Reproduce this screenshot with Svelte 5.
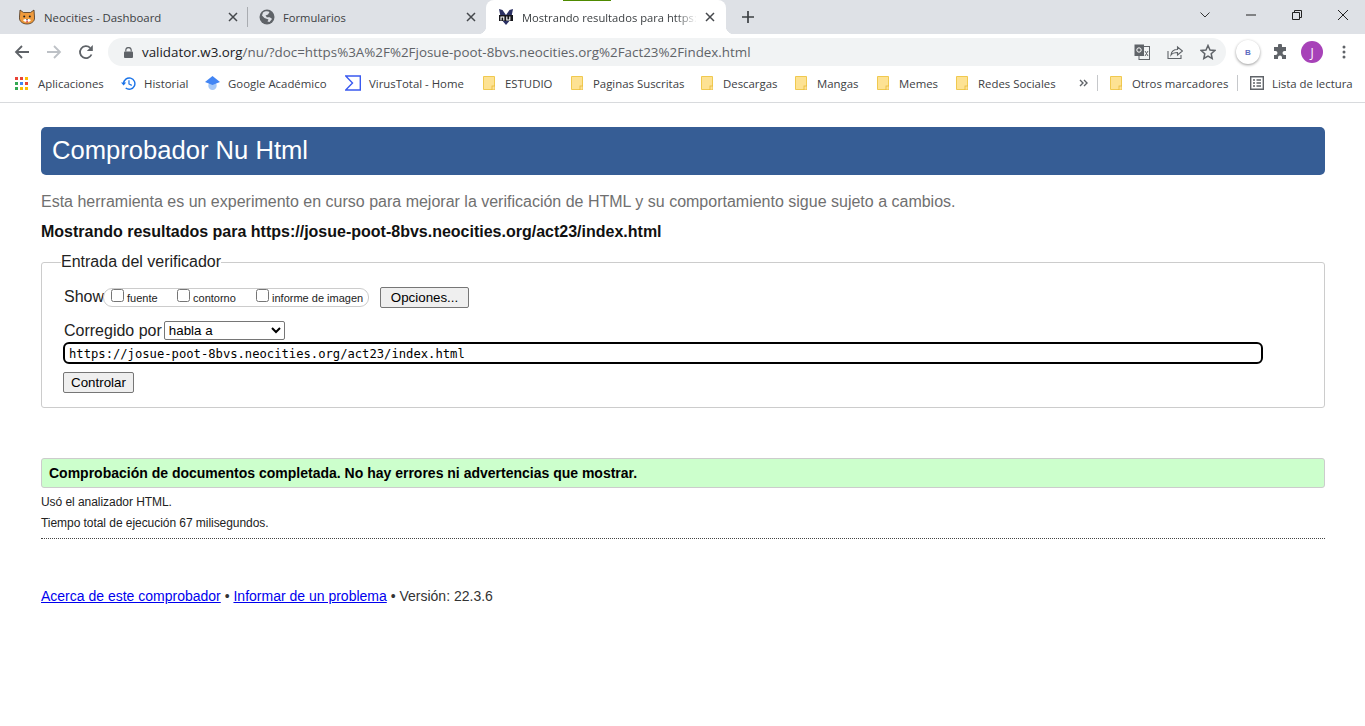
<script>
  const bookmarks = [
    { label: 'ESTUDIO', cls: 'w-estudio' },
    { label: 'Paginas Suscritas', cls: 'w-paginas' },
    { label: 'Descargas', cls: 'w-descargas' },
    { label: 'Mangas', cls: 'w-mangas' },
    { label: 'Memes', cls: 'w-memes' },
    { label: 'Redes Sociales', cls: 'w-redes' }
  ];
</script>

<div class="chrome">
  <div class="tabstrip">
    <div class="tab first">
      <svg class="fav" viewBox="0 0 16 16" width="16" height="16">
        <path d="M1 1l3.500 2.500h7L15 1l.6 8c0 3.500-3.400 6-7.600 6S.4 12.500.4 9z" fill="#ee9a3c" stroke="#4a3420" stroke-width=".8"/>
        <path d="M4 11c1-1.500 7-1.500 8 0-1 2.500-7 2.500-8 0z" fill="#fff"/>
        <circle cx="5.200" cy="7.500" r="1" fill="#222"/><circle cx="10.800" cy="7.500" r="1" fill="#222"/>
        <path d="M7 10h2l-1 1.200z" fill="#222"/><path d="M7.200 11.500h1.800v2h-1.800z" fill="#d85a5a"/>
      </svg>
      <span class="tab-title">Neocities - Dashboard</span>
      <svg class="close" viewBox="0 0 10 10" width="10" height="10"><path d="M1 1l8 8M9 1l-8 8" stroke="#45484c" stroke-width="1.500"/></svg>
    </div>
    <div class="tab second">
      <svg class="fav" viewBox="0 0 16 16" width="16" height="16">
        <circle cx="8" cy="8" r="7.500" fill="#5f6368"/>
        <path d="M4 3.500c2-1.500 5-1.500 6.500-.5L9 5.500 6.500 6.500 8 8.500c2-.5 4 0 5 1.500l-2.500 3-2-.5L9.500 10.500 5.500 9 3 6.500z" fill="#dee1e6"/>
      </svg>
      <span class="tab-title">Formularios</span>
      <svg class="close" viewBox="0 0 10 10" width="10" height="10"><path d="M1 1l8 8M9 1l-8 8" stroke="#45484c" stroke-width="1.500"/></svg>
    </div>
    <div class="tab active">
      <i class="progress"></i>
      <svg class="fav" viewBox="0 0 16 16" width="16" height="16">
        <path d="M1 0l3.500 1L8 6l3.500-5L15 0l-2 10-5 6-5-6z" fill="#2a2f62"/>
        <rect x="1" y="6" width="14" height="6" fill="#16161c"/>
        <path d="M3 11.500V8h2.800v3.500M8.800 7.500V11h3V7.500" fill="none" stroke="#fff" stroke-width="1.100"/>
      </svg>
      <span class="tab-title fade">Mostrando resultados para https:</span>
      <svg class="close" viewBox="0 0 10 10" width="10" height="10"><path d="M1 1l8 8M9 1l-8 8" stroke="#45484c" stroke-width="1.500"/></svg>
    </div>
    <svg class="newtab" viewBox="0 0 12 12" width="12" height="12"><path d="M6 0v12M0 6h12" stroke="#3c4043" stroke-width="1.700"/></svg>
    <div class="win">
      <svg viewBox="0 0 10 6" width="10" height="6"><path d="M.5.500L5 5 9.500.500" fill="none" stroke="#333" stroke-width="1"/></svg>
      <svg viewBox="0 0 10 10" width="10" height="10"><path d="M0 5h10" stroke="#222" stroke-width="1"/></svg>
      <svg viewBox="0 0 10 10" width="10" height="10"><path d="M.5 2.500h7v7h-7zM2.500 2.500v-2h7v7h-2" fill="none" stroke="#222" stroke-width="1"/></svg>
      <svg viewBox="0 0 10 10" width="10" height="10"><path d="M0 0l10 10M10 0L0 10" stroke="#222" stroke-width="1"/></svg>
    </div>
  </div>

  <div class="toolbar">
    <svg class="nav" viewBox="0 0 16 16" width="16" height="16"><path d="M15 8H2M8 2L2 8l6 6" fill="none" stroke="#5f6368" stroke-width="1.800"/></svg>
    <svg class="nav" viewBox="0 0 16 16" width="16" height="16"><path d="M1 8h13M8 2l6 6-6 6" fill="none" stroke="#bdc1c6" stroke-width="1.800"/></svg>
    <svg class="nav" viewBox="0 0 16 16" width="16" height="16"><path d="M13.500 10.500A6 6 0 1 1 12.200 3.800" fill="none" stroke="#5f6368" stroke-width="1.800"/><path d="M14.800 1v6h-6z" fill="#5f6368"/></svg>
    <div class="omnibox">
      <svg viewBox="0 0 10 12" width="9" height="11"><path d="M2 5V3.500a3 3 0 0 1 6 0V5" fill="none" stroke="#5f6368" stroke-width="1.300"/><rect y="5" width="10" height="7" rx="1" fill="#5f6368"/></svg>
      <span class="url"><b>validator.w3.org</b>/nu/?doc=https%3A%2F%2Fjosue-poot-8bvs.neocities.org%2Fact23%2Findex.html</span>
      <div class="omni-icons">
        <svg viewBox="0 0 16 16" width="16" height="16"><rect x="5" y="2.500" width="10.500" height="13" fill="#f1f3f4" stroke="#5f6368"/><rect x=".500" y=".500" width="9.500" height="11.500" fill="#5f6368"/><circle cx="5" cy="6" r="2.200" fill="none" stroke="#fff"/><path d="M11 7l3 5M14 7l-3 5" stroke="#5f6368"/></svg>
        <svg viewBox="0 0 16 16" width="16" height="16"><path d="M1 7v7.500h13V11" fill="none" stroke="#5f6368" stroke-width="1.100"/><path d="M4 11c.500-4 3-5.500 6.500-5.500V3l5 4-5 4V8.500C8 8.500 5.500 9 4 11z" fill="none" stroke="#5f6368" stroke-width="1.100"/></svg>
        <svg viewBox="0 0 16 16" width="16" height="16"><path d="M8 1.500l2 4.500 4.800.500-3.600 3.200 1 4.800L8 12.100 3.800 14.500l1-4.800L1.200 6.500 6 6z" fill="none" stroke="#5f6368" stroke-width="1.500"/></svg>
      </div>
    </div>
    <span class="ext-b">B</span>
    <svg class="puzzle" viewBox="0 0 16 16" width="16" height="16"><path d="M6 1.500a2 2 0 0 1 4 0V3h4v4h-1.500a2 2 0 0 0 0 4H14v4h-4v-1.500a2 2 0 0 0-4 0V15H2v-4h1.500a2 2 0 0 0 0-4H2V3h4z" fill="#5f6368"/></svg>
    <span class="avatar">J</span>
    <svg class="dots" viewBox="0 0 4 14" width="4" height="14"><circle cx="2" cy="2" r="1.500" fill="#5f6368"/><circle cx="2" cy="7" r="1.500" fill="#5f6368"/><circle cx="2" cy="12" r="1.500" fill="#5f6368"/></svg>
  </div>

  <div class="bookmarks">
    <div class="bm w-apps">
      <svg class="wide-gap" viewBox="0 0 13 13" width="13" height="13">
        <rect width="3" height="3" fill="#ea4335"/><rect x="5" width="3" height="3" fill="#ea4335"/><rect x="10" width="3" height="3" fill="#fbbc04"/>
        <rect y="5" width="3" height="3" fill="#34a853"/><rect x="5" y="5" width="3" height="3" fill="#4285f4"/><rect x="10" y="5" width="3" height="3" fill="#ea4335"/>
        <rect y="10" width="3" height="3" fill="#34a853"/><rect x="5" y="10" width="3" height="3" fill="#fbbc04"/><rect x="10" y="10" width="3" height="3" fill="#fbbc04"/>
      </svg>
      <span>Aplicaciones</span>
    </div>
    <div class="bm w-hist">
      <svg viewBox="0 0 16 16" width="15" height="15"><path d="M2.800 8A6 6 0 1 1 5 12.800" fill="none" stroke="#1a73e8" stroke-width="1.500"/><path d="M0 7h5.500L2.800 10z" fill="#1a73e8"/><path d="M8.500 4.500V8.500l3 1.500" fill="none" stroke="#1a73e8" stroke-width="1.300"/></svg>
      <span>Historial</span>
    </div>
    <div class="bm w-scholar">
      <svg viewBox="0 0 16 16" width="15" height="15"><circle cx="8" cy="10.500" r="4.500" fill="#a5c8f8"/><path d="M0 6.500L8 0l8 6.500-8 3z" fill="#4285f4"/></svg>
      <span>Google Académico</span>
    </div>
    <div class="bm w-vt">
      <svg viewBox="0 0 16 16" width="16" height="16"><path d="M.700 1H15.300v14H.700L7.500 8z" fill="none" stroke="#3a5af0" stroke-width="1.400"/></svg>
      <span>VirusTotal - Home</span>
    </div>
    {#each bookmarks as b}
      <div class="bm {b.cls}">
        <svg class="wide-gap" viewBox="0 0 12 14" width="12" height="14"><path d="M.500.500h11v13H.500z" fill="#fde293" stroke="#f0c94f"/><rect x="9" y="10" width="3" height="4" fill="#fde293" stroke="#e8b93a" stroke-width=".8"/></svg>
        <span>{b.label}</span>
      </div>
    {/each}
    <svg class="more" viewBox="0 0 9 8" width="9" height="8"><path d="M1 1l3 3-3 3M5 1l3 3-3 3" fill="none" stroke="#5f6368" stroke-width="1.400"/></svg>
    <i class="sep"></i>
    <div class="bm other">
      <svg class="wide-gap" viewBox="0 0 12 14" width="12" height="14"><path d="M.500.500h11v13H.500z" fill="#fde293" stroke="#f0c94f"/><rect x="9" y="10" width="3" height="4" fill="#fde293" stroke="#e8b93a" stroke-width=".8"/></svg>
      <span>Otros marcadores</span>
    </div>
    <i class="sep two"></i>
    <div class="bm reading">
      <svg viewBox="0 0 14 14" width="14" height="14"><path d="M.700.700h12.600v12.600H.700z" fill="none" stroke="#5f6368" stroke-width="1.400"/><path d="M3 4h2M6.500 4H11M3 7h2M6.500 7H11M3 10h2M6.500 10H11" stroke="#5f6368" stroke-width="1.300"/></svg>
      <span>Lista de lectura</span>
    </div>
  </div>
</div>

<main class="page">
  <h1>Comprobador Nu Html</h1>
  <p class="lead">Esta herramienta es un experimento en curso para mejorar la verificación de HTML y su comportamiento sigue sujeto a cambios.</p>
  <h2>Mostrando resultados para https://josue-poot-8bvs.neocities.org/act23/index.html</h2>

  <fieldset class="input">
    <legend>Entrada del verificador</legend>
    <div class="row show">
      <span>Show</span>
      <div class="pill">
        <label class="l-fuente"><input type="checkbox" /><span>fuente</span></label>
        <label class="l-contorno"><input type="checkbox" /><span>contorno</span></label>
        <label><input type="checkbox" /><span>informe de imagen</span></label>
      </div>
      <button class="opts">Opciones...</button>
    </div>
    <div class="row by">
      <span>Corregido por</span>
      <select><option>habla a</option></select>
    </div>
    <input class="urlbox" type="text" value="https://josue-poot-8bvs.neocities.org/act23/index.html" />
    <button class="check">Controlar</button>
  </fieldset>

  <div class="success">Comprobación de documentos completada. No hay errores ni advertencias que mostrar.</div>
  <p class="small first-small">Usó el analizador HTML.</p>
  <p class="small">Tiempo total de ejecución 67 milisegundos.</p>
  <div class="rule"></div>
  <p class="foot"><a href="#a">Acerca de este comprobador</a> • <a href="#b">Informar de un problema</a> • Versión: 22.3.6</p>
</main>

<style>
  :global(body) { margin: 0; background: #fff; font-family: "Liberation Sans", Arial, sans-serif; color: #000; }
  .chrome { font-family: "Open Sans", "Noto Sans", sans-serif; font-size: 12px; color: #3c4043; }
  svg { display: block; flex: none; }

  .tabstrip { height: 34px; background: #dee1e6; display: flex; align-items: center; position: relative; }
  .tab { height: 34px; box-sizing: border-box; display: flex; align-items: center; flex: none; position: relative; }
  .tab.first { width: 248px; padding: 0 10px 0 19px; }
  .tab.first::after { content: ""; position: absolute; right: 0; top: 7px; height: 20px; width: 1px; background: #a9acb1; }
  .tab.second { width: 238px; padding: 0 10px 0 11px; }
  .tab.active { background: #fff; width: 240px; padding: 0 11px 0 12px; border-radius: 8px 8px 0 0; }
  .tab.active::before, .tab.active::after { content: ""; position: absolute; bottom: 0; width: 8px; height: 8px; }
  .tab.active::before { left: -8px; background: radial-gradient(circle at 0 0, transparent 8px, #fff 8.500px); }
  .tab.active::after { right: -8px; background: radial-gradient(circle at 100% 0, transparent 8px, #fff 8.500px); }
  .tab-title { flex: 1; margin-left: 8px; white-space: nowrap; overflow: hidden; font-size: 11.200px; }
  .first .tab-title { margin-left: 9px; font-size: 11.400px; }
  .fade { -webkit-mask-image: linear-gradient(to right, #000 88%, transparent 100%); mask-image: linear-gradient(to right, #000 88%, transparent 100%); }
  .progress { position: absolute; left: 77px; top: 0; width: 48px; height: 1px; background: #4e8a00; }
  .close { margin-left: 8px; }
  .newtab { margin-left: 16px; }
  .win { margin-left: auto; display: flex; align-items: center; height: 30px; margin-top: -4px; padding-right: 17px; gap: 36px; }

  .toolbar { height: 36px; background: #fff; display: flex; align-items: center; padding: 0 11px 0 14px; box-sizing: border-box; }
  .nav { margin-right: 16px; }
  .nav:nth-child(3) { margin-right: 15px; }
  .omnibox { width: 1118px; height: 28px; flex: none; background: #f1f3f4; border-radius: 14px; display: flex; align-items: center; padding: 0 10px 0 16px; box-sizing: border-box; margin-left: -1px; }
  .url { margin-left: 9px; font-size: 13.380px; color: #5f6368; white-space: nowrap; }
  .url b { font-weight: 400; color: #202124; }
  .omni-icons { margin-left: auto; display: flex; gap: 17px; align-items: center; }
  .ext-b { margin-left: 10px; width: 24px; height: 24px; border-radius: 50%; background: #fff; box-shadow: 0 1px 3px rgba(0,0,0,.4); color: #5c6bc0; font: 700 8px "Liberation Sans", sans-serif; display: flex; align-items: center; justify-content: center; flex: none; }
  .puzzle { margin-left: 12px; }
  .avatar { margin-left: 13px; width: 22px; height: 22px; border-radius: 50%; background: #a742b8; color: #fff; font-size: 12px; display: flex; align-items: center; justify-content: center; flex: none; }
  .dots { margin-left: 19px; }

  .bookmarks { height: 33px; box-sizing: border-box; background: #fff; border-bottom: 1px solid #d8dadd; display: flex; align-items: center; padding: 0 0 6px 15px; color: #3c4043; }
  .bm { display: flex; align-items: center; flex: none; white-space: nowrap; gap: 8px; }
  .bm span { font-size: 11.400px; }
  .wide-gap { margin-right: 2px; }
  .w-apps { width: 106px; }
  .w-hist { width: 84px; }
  .w-scholar { width: 140px; }
  .w-vt { width: 138px; }
  .w-estudio { width: 88px; }
  .w-paginas { width: 130px; }
  .w-descargas { width: 94px; }
  .w-mangas { width: 82px; }
  .w-memes { width: 79px; }
  .w-redes { width: 123px; }
  .sep { width: 1px; height: 16px; background: #c6c8cb; margin-left: 9px; flex: none; }
  .other { margin-left: 12px; width: 116px; }
  .sep.two { margin-left: 11px; }
  .reading { margin-left: 12px; }

  .page { padding: 24px 40px 0 41px; }
  h1 { margin: 0; height: 48px; line-height: 46px; background: #365d95; color: #fff; font-size: 25.600px; font-weight: 400; padding-left: 11px; border-radius: 5px; }
  .lead { margin: 18px 0 0; font-size: 16px; line-height: 18px; color: #707070; }
  h2 { margin: 12px 0 0; font-size: 16px; line-height: 18px; font-weight: 700; color: #111; }
  fieldset.input { margin: 12px 0 0; padding: 15px 21px 14px; border: 1px solid #ccc; border-radius: 3px; height: 155px; box-sizing: border-box; }
  legend { padding: 0; margin-left: -2px; font-size: 16px; color: #222; line-height: 18px; }
  .row { display: flex; align-items: center; font-size: 16px; color: #222; padding-left: 1px; }
  .show { height: 22px; }
  .pill { height: 19px; width: 266px; flex: none; box-sizing: border-box; border: 1px solid #ccc; border-radius: 9px; display: flex; align-items: center; font-size: 11px; padding-left: 7px; margin-left: -1px; }
  .pill label { display: flex; align-items: center; flex: none; }
  .l-fuente { width: 66px; }
  .l-contorno { width: 79px; }
  .pill input { margin: 0 3px 3px 0; width: 13px; height: 13px; }
  .pill span { padding-top: 2px; }
  .opts { margin-left: 11px; height: 21px; width: 89px; padding: 0; background: #efefef; border: 1px solid #767676; border-radius: 2px; font: 13.330px "Liberation Sans", sans-serif; color: #000; }
  .by { margin-top: 13px; height: 19px; }
  select { margin-left: 2px; width: 121px; height: 19px; font: 13.330px "Liberation Sans", sans-serif; padding: 0; background: #fff; border: 1px solid #767676; border-radius: 2px; color: #000; }
  .urlbox { display: block; margin-top: 2px; box-sizing: border-box; width: 1200px; height: 22px; border: 2px solid #000; border-radius: 6px; padding: 1px 4px 0; font: 12.180px "DejaVu Sans Mono", monospace; color: #000; outline: none; }
  .check { display: block; margin-top: 8px; width: 71px; height: 21px; padding: 0; background: #efefef; border: 1px solid #767676; border-radius: 2px; font: 13.330px "Liberation Sans", sans-serif; color: #000; }

  .success { margin-top: 50px; height: 30px; box-sizing: border-box; background: #ccffcc; border: 1px solid #ccc; border-radius: 3px; padding-left: 7px; line-height: 28px; font-size: 14px; font-weight: 700; }
  .small { margin: 0; font-size: 12px; line-height: 14px; color: #222; letter-spacing: -.05px; }
  .first-small { margin-top: 7px; }
  .small + .small { margin-top: 7px; }
  .rule { margin-top: 8px; border-top: 1px dotted #444; }
  .foot { margin: 49px 0 0; font-size: 14px; line-height: 16px; color: #333; }
  a { color: #0000ee; }
</style>
